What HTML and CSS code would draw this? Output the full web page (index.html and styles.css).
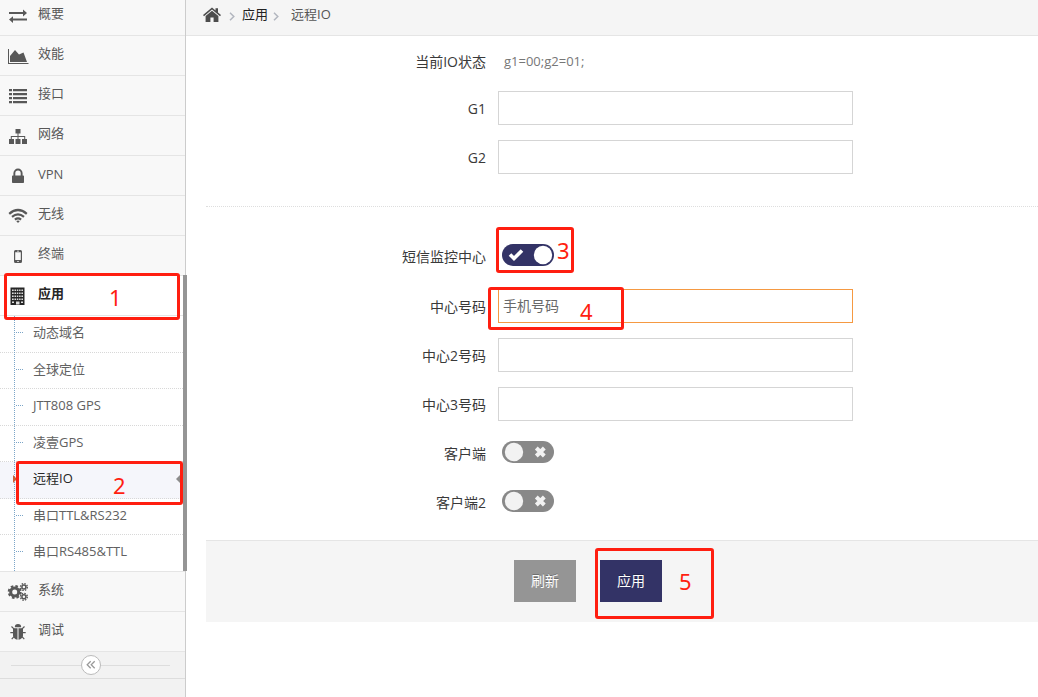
FILE: index.html
```html
<!DOCTYPE html>
<html lang="zh-CN">
<head>
<meta charset="utf-8">
<title>远程IO</title>
<link rel="stylesheet" href="styles.css">
</head>
<body>
<div class="app">
  <aside class="sidebar">
    <nav class="nav">
      <a class="nav-item first"><svg class="icon" viewBox="0 0 22 20"><path d="M2 6h14V3.600L20 7 16 10.400V8H2zM20 12.500H6V10.200L2 13.600 6 17V14.600H20z"/></svg><span>概要</span></a>
      <a class="nav-item"><svg class="icon" viewBox="0 0 22 20"><path d="M1 3h1v14h19.500v1H1zM3 16v-6l5-6 4 4.500L16.500 6.500 20 16z"/></svg><span>效能</span></a>
      <a class="nav-item"><svg class="icon" viewBox="0 0 22 20"><path d="M2 3h3v2.300H2zM6 3h14v2.300H6zM2 7h3v2.300H2zM6 7h14v2.300H6zM2 11h3v2.300H2zM6 11h14v2.300H6zM2 15h3v2.300H2zM6 15h14v2.300H6z"/></svg><span>接口</span></a>
      <a class="nav-item"><svg class="icon" viewBox="0 0 22 20"><path d="M8.500 3h5v4.500h-2v2.500h6.700v3H20v5h-5v-5h2.200v-2h-5.700v2H13.500v5h-5v-5h2v-2H4.800v2H7v5H2v-5h1.800v-3h6.700V7.500h-2z"/></svg><span>网络</span></a>
      <a class="nav-item"><svg class="icon" viewBox="0 0 22 20"><path fill-rule="evenodd" d="M6.400 9.500V7.200a4.600 4.600 0 0 1 9.200 0V9.500h.6q.8 0 .8.800v6q0 .8-.8.800H5.800q-.8 0-.8-.8v-6q0-.8.8-.8zM8.300 9.500h5.400V7.200a2.700 2.700 0 0 0-5.400 0z"/></svg><span class="latin">VPN</span></a>
      <a class="nav-item"><svg class="icon" viewBox="0 0 22 20"><path class="line" d="M2.200 7.800q8.800-7.600 17.600 0M5 10.800q6-5 12 0M7.900 13.600q3.100-2.400 6.200 0"/><path d="M9.200 15.100q1.800-1.200 3.600 0L11 17z"/></svg><span>无线</span></a>
      <a class="nav-item"><svg class="icon" viewBox="0 0 22 20"><path fill-rule="evenodd" d="M8.500 4h5q1.500 0 1.500 1.500v10q0 1.500-1.500 1.500h-5Q7 17 7 15.500v-10Q7 4 8.500 4zM8.200 6.300v7.800h5.600V6.300zM10 4.800v.6h2v-.6zM10.300 15v1h1.400v-1z"/></svg><span>终端</span></a>
      <a class="nav-item active"><svg class="icon" viewBox="0 0 22 20"><path d="M3.500 1.500h14v17.500h-14z"/><path class="windows" d="M5 3.500h11V5H5zM5 6.500h11V8H5zM5 9.500h11V11H5zM5 12.500h11V14H5zM5 15.500h2V17H5zM14 15.500h2V17h-2zM9 15.500h3.500v3H9z"/><path d="M6.700 3h.8v11h-.8zM9 3h.8v11H9zM11.300 3h.8v11h-.8zM13.600 3h.8v11h-.8z"/></svg><span>应用</span></a>
    </nav>
    <div class="submenu">
      <a class="sub-item tall">动态域名</a>
      <a class="sub-item">全球定位</a>
      <a class="sub-item tall">JTT808 GPS</a>
      <a class="sub-item">凌壹GPS</a>
      <a class="sub-item tall current">远程IO</a>
      <a class="sub-item">串口TTL&amp;RS232</a>
      <a class="sub-item tall">串口RS485&amp;TTL</a>
    </div>
    <nav class="nav">
      <a class="nav-item"><svg class="icon" viewBox="0 0 22 20"><circle class="gear" cx="7.700" cy="10" r="4"/><circle class="teeth" cx="7.700" cy="10" r="6"/><circle class="gear small" cx="16.900" cy="5" r="2"/><circle class="teeth small" cx="16.900" cy="5" r="3.400"/><circle class="gear small" cx="16.900" cy="14.800" r="2"/><circle class="teeth small" cx="16.900" cy="14.800" r="3.400"/></svg><span>系统</span></a>
      <a class="nav-item"><svg class="icon" viewBox="0 0 22 20"><path d="M7.800 5.300a3.200 3.200 0 0 1 6.400 0zM6 6.200h4.500v11.500Q6.500 17 6 13.500zM11.500 6.200H16v7.300q-.5 3.500-4.500 4.200z"/><path class="legs" d="M4.500 4.500l2.700 2.700M17.500 4.500l-2.700 2.700M3.300 10.700h4M18.700 10.700h-4M4.700 17.200l2.800-3M17.300 17.200l-2.800-3"/></svg><span>调试</span></a>
    </nav>
    <div class="collapse"><span class="collapse-btn"><svg viewBox="0 0 18 18"><path d="M8.700 5.300L5.200 8.800l3.500 3.500M12.700 5.300L9.200 8.800l3.500 3.500"/></svg></span></div>
    <div class="scroll-thumb"></div>
  </aside>
  <main class="main">
    <header class="breadcrumb">
      <svg class="home" viewBox="0 0 18 16"><path d="M0 8L9 .5 12.500 3.400V1.200H15v4.300L18 8l-1 1.200L9 2.600 1 9.200zM2.600 9L9 3.800 15.400 9v6H10.600v-4.500H7.400V15H2.600z"/></svg>
      <svg class="chevron" viewBox="0 0 6 9"><path d="M1 .8l3.800 3.700L1 8.200"/></svg>
      <a class="crumb-link">应用</a>
      <svg class="chevron" viewBox="0 0 6 9"><path d="M1 .8l3.800 3.700L1 8.200"/></svg>
      <span class="crumb">远程IO</span>
    </header>
    <form class="form">
      <div class="row status-row"><label>当前IO状态</label><span class="status">g1=00;g2=01;</span></div>
      <div class="row"><label>G1</label><input class="field" type="text"></div>
      <div class="row"><label>G2</label><input class="field" type="text"></div>
      <div class="divider"></div>
      <div class="row switch-row"><label>短信监控中心</label><span class="switch on"><svg viewBox="0 0 52 22"><path class="check" d="M8 10.500l4 4 8-8"/><circle cx="41" cy="11" r="9.200"/></svg></span></div>
      <div class="row"><label>中心号码</label><input class="field focus" type="text" placeholder="手机号码"></div>
      <div class="row"><label>中心2号码</label><input class="field" type="text"></div>
      <div class="row"><label>中心3号码</label><input class="field" type="text"></div>
      <div class="row"><label>客户端</label><span class="switch"><svg viewBox="0 0 52 22"><circle cx="12" cy="11" r="9.200"/><path class="cross" d="M34.300 7l8 8M42.300 7l-8 8"/></svg></span></div>
      <div class="row"><label>客户端2</label><span class="switch"><svg viewBox="0 0 52 22"><circle cx="12" cy="11" r="9.200"/><path class="cross" d="M34.300 7l8 8M42.300 7l-8 8"/></svg></span></div>
      <div class="actions"><button type="button" class="btn">刷新</button><button type="button" class="btn primary">应用</button></div>
    </form>
  </main>
  <div class="mark mark-1"><span>1</span></div>
  <div class="mark mark-2"><span>2</span></div>
  <div class="mark mark-3"><span>3</span></div>
  <div class="mark mark-4"><span>4</span></div>
  <div class="mark mark-5"><span>5</span></div>
</div>
</body>
</html>
```

FILE: styles.css
```css
* { box-sizing: border-box; }
body {
  margin: 0;
  background: #fff;
  color: #393939;
  font: 13px/20px "Open Sans", "Noto Sans CJK SC", sans-serif;
}
.app { position: relative; display: flex; width: 1038px; height: 697px; overflow: hidden; }

/* Sidebar */
.sidebar { position: relative; width: 186px; flex: none; background: #f2f2f2; border-right: 1px solid #ccc; }
.nav-item {
  display: flex;
  height: 40px;
  padding: 7px 0 0 7px;
  background: #f8f8f8;
  border-bottom: 1px solid #e5e5e5;
  color: #585858;
}
.nav-item.first { margin-top: -4px; }
.nav-item span { margin-left: 9px; }
.nav-item .latin { margin-top: 1px; }
.nav-item.active { background: #fff; color: #262626; font-weight: 700; }
.icon { width: 22px; height: 20px; margin-top: 3px; fill: currentColor; flex: none; }
.icon .line { fill: none; stroke: currentColor; stroke-width: 2.200; }
.icon .windows { fill: #ddd; }
.icon .gear { fill: none; stroke: currentColor; stroke-width: 3; }
.icon .teeth { fill: none; stroke: currentColor; stroke-width: 2; stroke-dasharray: 2.600 2.110; }
.icon .gear.small { stroke-width: 1.500; }
.icon .teeth.small { stroke-width: 1.400; stroke-dasharray: 1.500 1.170; }
.icon .legs { fill: none; stroke: currentColor; stroke-width: 1.200; }

.submenu { position: relative; background: #fff; border-bottom: 1px solid #e5e5e5; }
.submenu::before { content: ""; position: absolute; z-index: 1; left: 14px; top: 0; bottom: 0; border-left: 1px dotted #7ba5c8; }
.sub-item {
  position: relative;
  display: block;
  height: 36px;
  padding: 6px 0 0 33px;
  border-bottom: 1px dotted #d8d8d8;
  color: #616161;
}
.sub-item.tall { height: 37px; }
.sub-item:last-child { height: 36px; border-bottom: 0; }
.sub-item::before { content: ""; position: absolute; left: 16px; top: 16px; width: 7px; border-top: 1px dotted #7ba5c8; }
.sub-item.current { background: #f5f6fb; color: #262626; }
.sub-item.current::before {
  z-index: 2; left: 13px; top: 13px; width: 0;
  border: 4px solid transparent; border-left-color: #c86139; border-right: 0;
}
.sub-item.current::after {
  content: ""; position: absolute; right: 2px; top: 10px;
  border: 7px solid transparent; border-right-color: #8c8c8c; border-left: 0;
}
.collapse { display: flex; align-items: center; height: 27px; padding: 0 15px 0 11px; border-bottom: 1px solid #ddd; }
.collapse::before, .collapse::after { content: ""; flex: 1; border-top: 1px solid #ddd; }
.collapse-btn { width: 20px; height: 20px; border: 1px solid #bbb; border-radius: 50%; background: #fff; }
.collapse-btn svg { display: block; width: 18px; height: 18px; fill: none; stroke: #999; stroke-width: 1.300; }
.scroll-thumb { position: absolute; z-index: 1; left: 183px; top: 275px; width: 4px; height: 296px; background: #959595; }

/* Content */
.main { flex: 1; }
.breadcrumb { display: flex; height: 36px; padding: 4px 0 0 17px; background: #f5f5f5; border-bottom: 1px solid #e5e5e5; color: #555; }
.home { width: 18px; height: 16px; margin-top: 3px; fill: #4c4c4c; }
.chevron { width: 6px; height: 9px; margin: 8px 7px 0 8px; fill: none; stroke: #b2b6bf; stroke-width: 1.500; }
.crumb-link { color: #222; }
.crumb-link + .chevron { margin: 8px 12px 0 5px; }

.form { padding: 6px 0 0 20px; }
.row { display: flex; height: 34px; margin-bottom: 15px; }
.row label { width: 280px; margin-right: 12px; padding-top: 8px; text-align: right; font-size: 14px; }
.status-row label { padding-top: 10px; }
.switch-row label { padding-top: 7px; }
.status { padding: 9px 0 0 6px; color: #777; }
.field {
  width: 355px; height: 34px; padding: 0 4px;
  border: 1px solid #d5d5d5; border-radius: 0; outline: 0;
  background: #fff; font: 14px "Open Sans", "Noto Sans CJK SC", sans-serif;
}
.field.focus { padding-bottom: 2px; border-color: #f59942; }
.field::placeholder { color: #696969; opacity: 1; }
.divider { margin: 32px 0 33px; border-top: 1px dotted #dedede; }
.switch { width: 52px; height: 22px; margin: 5px 0 0 4px; border-radius: 11px; background: #888; }
.switch.on { margin-top: 4px; background: #336; }
.switch svg { display: block; width: 52px; height: 22px; }
.switch circle { fill: #f2f2f2; }
.switch.on circle { fill: #fff; }
.switch .check { fill: none; stroke: #fff; stroke-width: 3.600; }
.switch .cross { fill: none; stroke: #f2f2f2; stroke-width: 4; }
.actions {
  display: flex; gap: 24px; height: 82px; margin-top: 21px; padding: 19px 0 0 308px;
  border-top: 1px solid #e5e5e5; background: #f5f5f5;
}
.btn {
  width: 62px; height: 42px; padding: 0; border: 0; background: #959595; color: #fff;
  font: 14px/42px "Open Sans", "Noto Sans CJK SC", sans-serif; text-shadow: 0 -1px 0 rgba(0,0,0,.25);
}
.btn.primary { background: #336; }

/* Numbered callouts over the page */
.mark { position: absolute; z-index: 2; border: 3px solid #ff1e10; border-radius: 3px; color: #ff1e10; font: 22px/26px "Noto Sans", sans-serif; }
.mark span { position: absolute; }
.mark-1 { left: 4px; top: 273px; width: 176px; height: 47px; }
.mark-1 span { left: 102px; top: 8px; }
.mark-2 { left: 16px; top: 461px; width: 167px; height: 44px; }
.mark-2 span { left: 94px; top: 8px; }
.mark-3 { left: 496px; top: 227px; width: 78px; height: 46px; }
.mark-3 span { left: 58px; top: 7px; }
.mark-4 { left: 488px; top: 287px; width: 136px; height: 43px; }
.mark-4 span { left: 89px; top: 8px; }
.mark-5 { left: 595px; top: 548px; width: 119px; height: 71px; }
.mark-5 span { left: 81px; top: 17px; }
```
